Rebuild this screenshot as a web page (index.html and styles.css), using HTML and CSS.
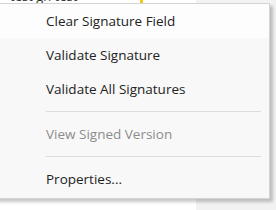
FILE: index.html
```html
<!DOCTYPE html>
<html>
<head>
<meta charset="utf-8">
<link rel="stylesheet" href="styles.css">
</head>
<body>
<div class="page">
  <div class="doc-line">test gh test<span class="caret"></span></div>
  <div class="side"></div>
</div>
<div class="menu">
  <div class="item hover">Clear Signature Field</div>
  <div class="item">Validate Signature</div>
  <div class="item">Validate All Signatures</div>
  <div class="sep"></div>
  <div class="item disabled">View Signed Version</div>
  <div class="sep"></div>
  <div class="item">Properties...</div>
</div>
</body>
</html>
```
FILE: styles.css
```css
html, body {
  margin: 0;
  padding: 0;
  width: 276px;
  height: 210px;
  overflow: hidden;
  background: #ffffff;
  font-family: "Open Sans", "Noto Sans", sans-serif;
}
.page {
  display: flex;
  width: 276px;
  height: 210px;
}
.doc-line {
  flex: 1;
  margin-top: -11px;
  padding-left: 10px;
  font-size: 13px;
  line-height: 14px;
  height: 14px;
  color: #333;
  position: relative;
}
.caret {
  position: absolute;
  left: 140px;
  top: 8px;
  width: 3px;
  height: 6px;
  background: #f5c518;
}
.side {
  width: 80px;
  background: #f2f2f2;
}
.menu {
  position: absolute;
  left: -10px;
  top: 3px;
  width: 278px;
  background: #f8f8f8;
  border: 1px solid #d4d4d4;
  box-shadow: 3px 3px 3px rgba(0, 0, 0, 0.22);
  padding: 0 0 2px 0;
}
.item {
  height: 34px;
  line-height: 34px;
  padding-left: 55px;
  font-size: 13.5px;
  color: #222;
}
.item.hover {
  background: #fdfdfd;
}
.item.disabled {
  color: #8c8c8c;
}
.sep {
  height: 11px;
  margin: 0 8px 0 55px;
  position: relative;
}
.sep::after {
  content: "";
  position: absolute;
  left: 0;
  right: 0;
  top: 5px;
  height: 1px;
  background: #dcdcdc;
}
```
